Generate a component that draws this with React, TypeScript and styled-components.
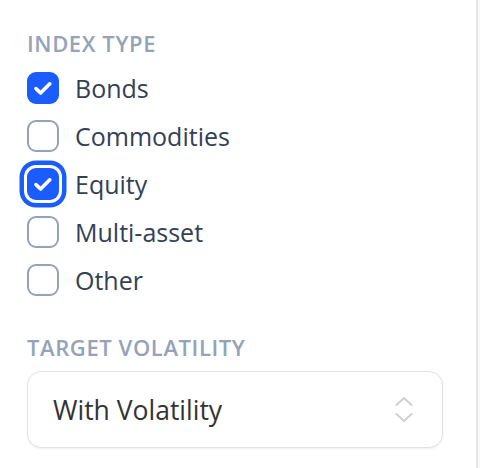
import React, { useState } from "react";
import styled, { createGlobalStyle } from "styled-components";

const GlobalStyle = createGlobalStyle`
  html, body {
    margin: 0;
    padding: 0;
    background: #f7f7f7;
  }
  body {
    font-family: "Open Sans", "Noto Sans", sans-serif;
  }
`;

type Option = { label: string; checked: boolean; focused?: boolean };

const initialOptions: Option[] = [
  { label: "Bonds", checked: true },
  { label: "Commodities", checked: false },
  { label: "Equity", checked: true, focused: true },
  { label: "Multi-asset", checked: false },
  { label: "Other", checked: false },
];

function App() {
  const [options, setOptions] = useState<Option[]>(initialOptions);

  const toggle = (index: number) => {
    setOptions((prev) =>
      prev.map((o, i) => (i === index ? { ...o, checked: !o.checked } : o))
    );
  };

  return (
    <>
      <GlobalStyle />
      <Panel>
        <Section>
          <SectionLabel>Index type</SectionLabel>
          <List>
            {options.map((option, i) => (
              <Row key={option.label} onClick={() => toggle(i)}>
                <Box $checked={option.checked} $focused={option.focused}>
                  {option.checked && (
                    <svg width="32" height="32" viewBox="0 0 32 32">
                      <path
                        d="M9 16.6l4.6 4.4 9.2-9.2"
                        fill="none"
                        stroke="#fff"
                        strokeWidth="3.6"
                        strokeLinecap="round"
                        strokeLinejoin="round"
                      />
                    </svg>
                  )}
                </Box>
                <RowText>{option.label}</RowText>
              </Row>
            ))}
          </List>
        </Section>
        <Section $gap>
          <SectionLabel>Target volatility</SectionLabel>
          <Select>
            <SelectText>With Volatility</SelectText>
            <svg width="20" height="30" viewBox="0 0 20 30">
              <path
                d="M2.5 10l7.5-7 7.5 7M2.5 19l7.5 7 7.5-7"
                fill="none"
                stroke="#d0d0d0"
                strokeWidth="2"
                strokeLinecap="round"
                strokeLinejoin="round"
              />
            </svg>
          </Select>
        </Section>
      </Panel>
    </>
  );
}

const Panel = styled.div`
  width: 478px;
  height: 468px;
  box-sizing: border-box;
  background: #ffffff;
  border-right: 2px solid #e6e6e6;
  padding: 28px 33px 0 27px;
`;

const Section = styled.div<{ $gap?: boolean }>`
  display: flex;
  flex-direction: column;
  margin-top: ${(props) => (props.$gap ? "28px" : "0")};
`;

const SectionLabel = styled.div`
  color: #94a3b8;
  font-size: 22px;
  font-weight: 600;
  line-height: 30px;
  letter-spacing: 0.6px;
  text-transform: uppercase;
`;

const List = styled.div`
  display: flex;
  flex-direction: column;
  margin-top: 6px;
`;

const Row = styled.label`
  display: flex;
  align-items: center;
  height: 48px;
  gap: 16px;
  cursor: pointer;
`;

const Box = styled.span<{ $checked: boolean; $focused?: boolean }>`
  width: 32px;
  height: 32px;
  flex-shrink: 0;
  box-sizing: border-box;
  border-radius: 9px;
  display: flex;
  align-items: center;
  justify-content: center;
  background: ${(props) => (props.$checked ? "#1b5cff" : "#ffffff")};
  border: ${(props) => (props.$checked ? "none" : "2px solid #94a3b8")};
  box-shadow: ${(props) =>
    props.$focused ? "0 0 0 3px #ffffff, 0 0 0 7.5px #1b5cff" : "none"};
`;

const RowText = styled.span`
  color: #334155;
  font-size: 25px;
  line-height: 32px;
`;

const Select = styled.div`
  margin-top: 9px;
  height: 77px;
  box-sizing: border-box;
  display: flex;
  align-items: center;
  justify-content: space-between;
  padding: 0 28px 0 25px;
  background: #ffffff;
  border: 1.5px solid #e2e2e2;
  border-radius: 14px;
  box-shadow: 0 1px 2px rgba(0, 0, 0, 0.06);
`;

const SelectText = styled.span`
  color: #333333;
  font-size: 26.5px;
  line-height: 34px;
`;

export default App;
